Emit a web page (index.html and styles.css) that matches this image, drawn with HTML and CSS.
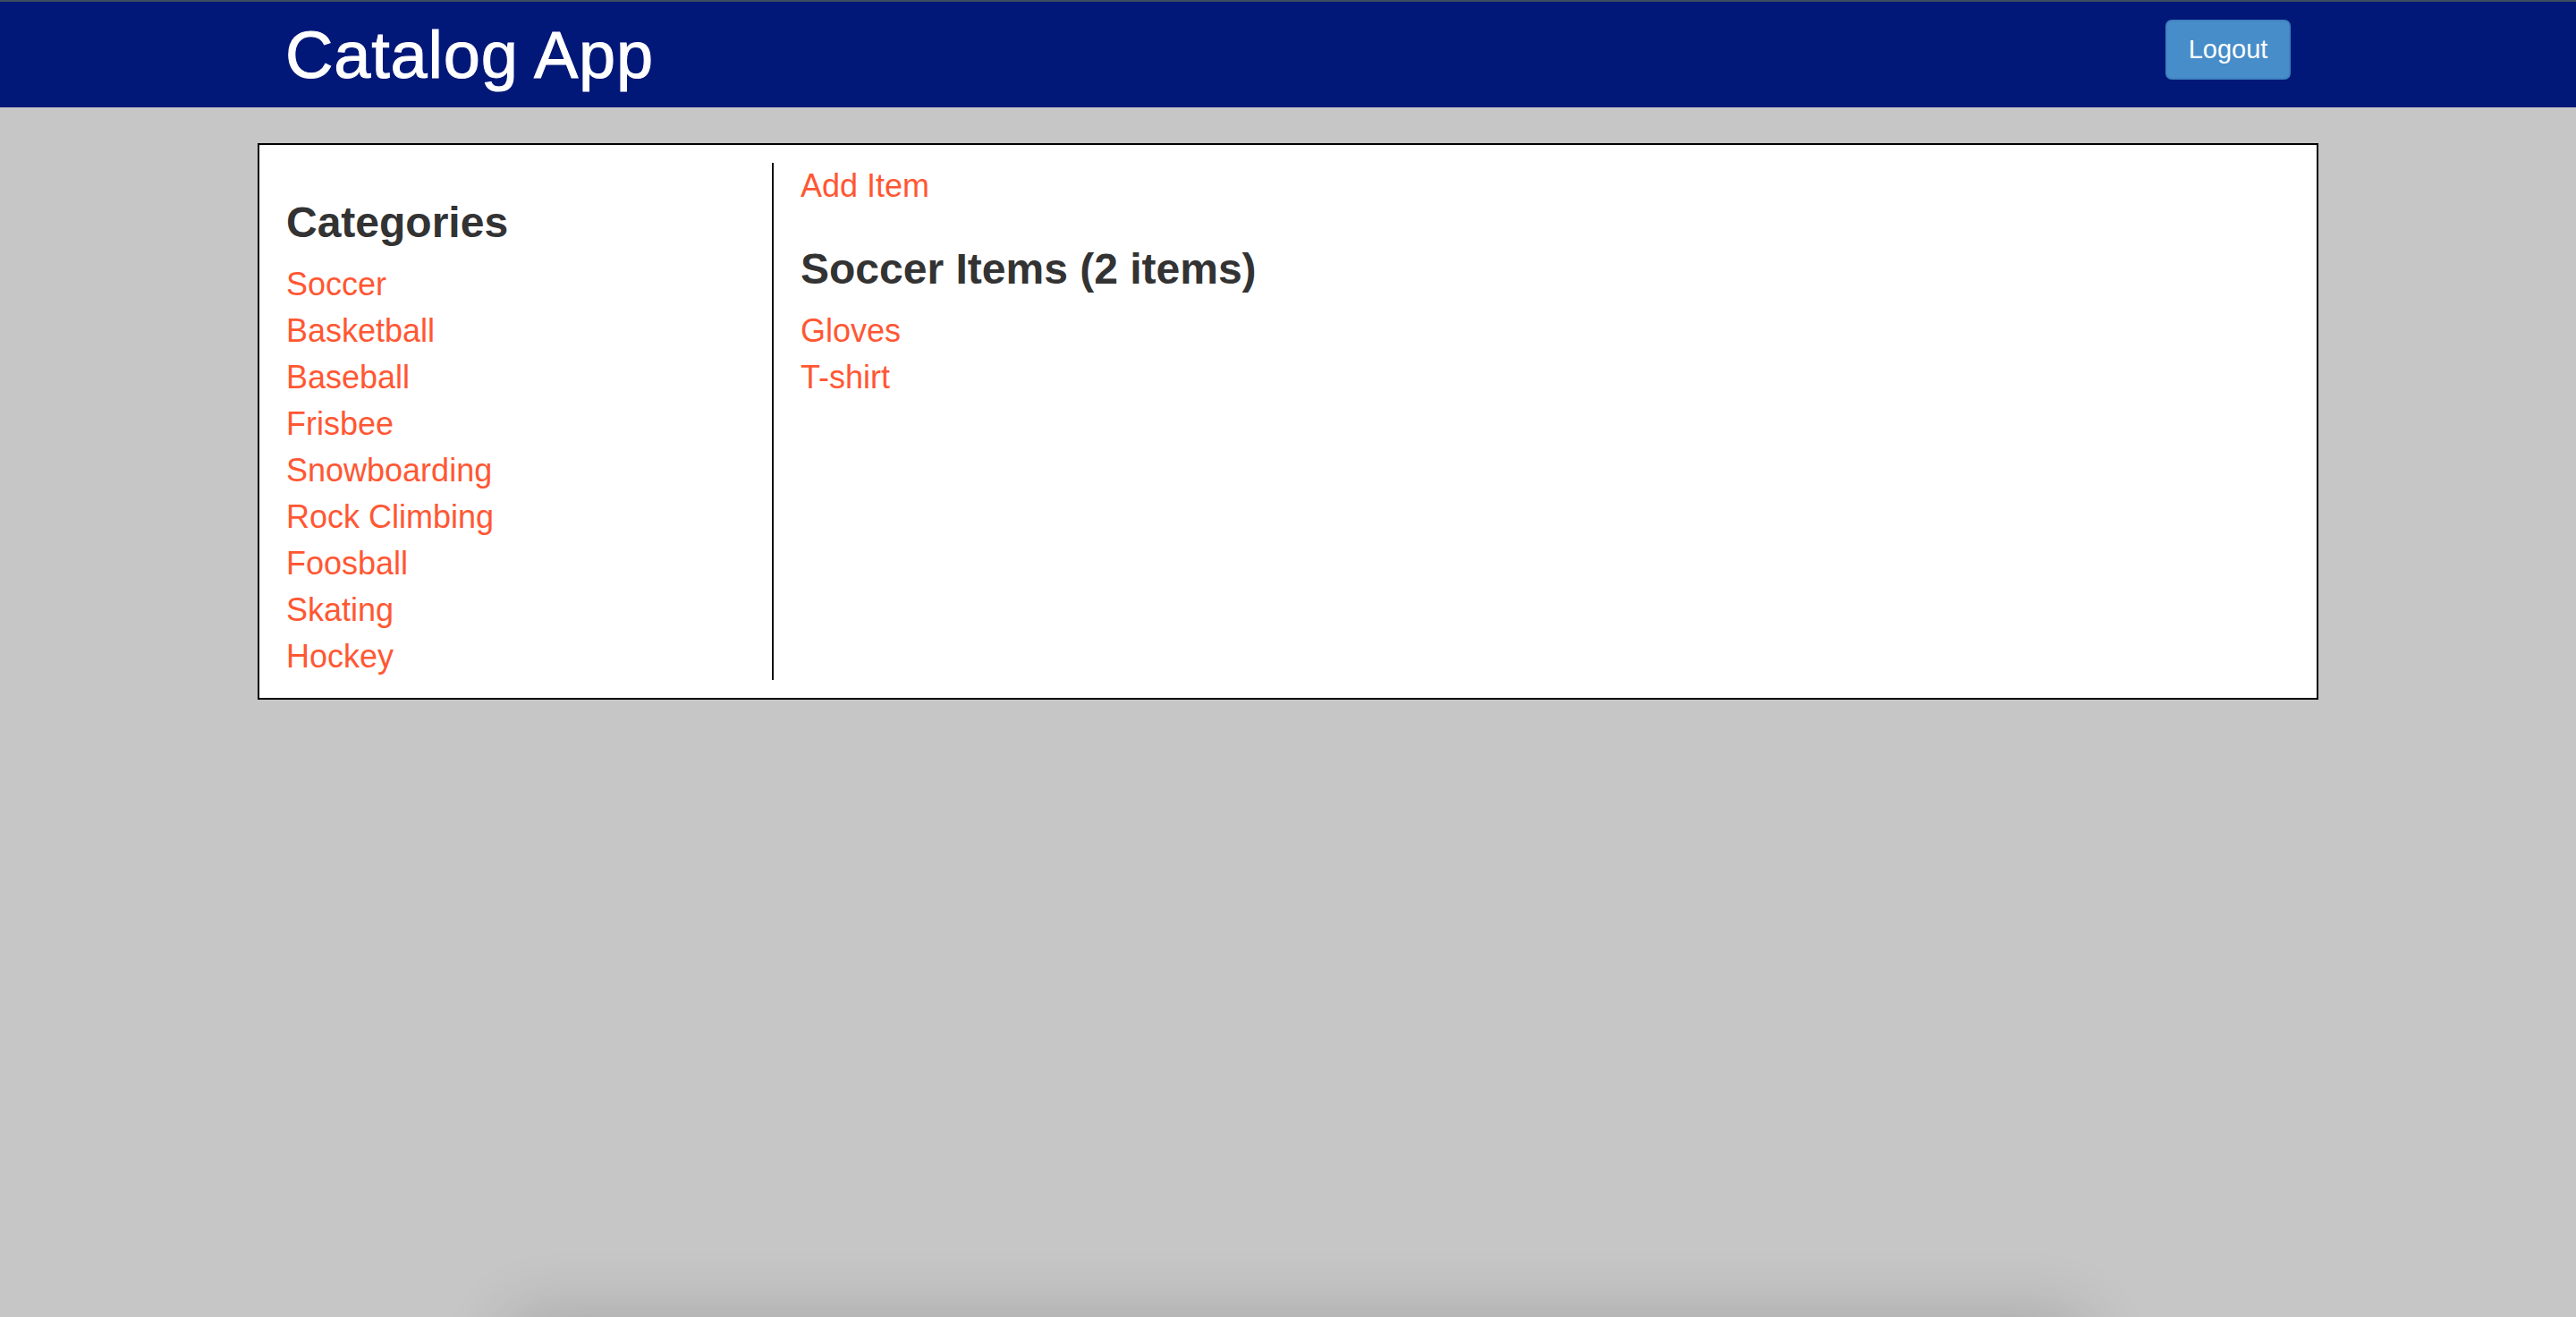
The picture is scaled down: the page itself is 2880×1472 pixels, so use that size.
FILE: index.html
```html
<!DOCTYPE html>
<html lang="en">
<head>
<meta charset="utf-8">
<title>Catalog App</title>
<link rel="stylesheet" href="styles.css">
</head>
<body>
<header class="topbar">
  <div class="topbar-inner">
    <h1 class="brand">Catalog App</h1>
    <a class="btn-logout" href="#">Logout</a>
  </div>
</header>
<main class="card">
  <section class="col-categories">
    <h3 class="heading">Categories</h3>
    <ul class="link-list">
      <li><a href="#">Soccer</a></li>
      <li><a href="#">Basketball</a></li>
      <li><a href="#">Baseball</a></li>
      <li><a href="#">Frisbee</a></li>
      <li><a href="#">Snowboarding</a></li>
      <li><a href="#">Rock Climbing</a></li>
      <li><a href="#">Foosball</a></li>
      <li><a href="#">Skating</a></li>
      <li><a href="#">Hockey</a></li>
    </ul>
  </section>
  <section class="col-items">
    <a class="add-link" href="#">Add Item</a>
    <h3 class="heading">Soccer Items (2 items)</h3>
    <ul class="link-list">
      <li><a href="#">Gloves</a></li>
      <li><a href="#">T-shirt</a></li>
    </ul>
  </section>
</main>
<div class="dock-shadow"></div>
</body>
</html>
```
FILE: styles.css
```css
html, body {
  margin: 0;
  padding: 0;
}
body {
  background: #c6c6c6;
  font-family: "Liberation Sans", Arial, sans-serif;
  color: #333333;
  height: 1472px;
  overflow: hidden;
}
.topbar {
  box-sizing: border-box;
  height: 120px;
  background: #011878;
  border-top: 2px solid #3c4d5c;
}
.topbar-inner {
  width: 2242px;
  margin: 0 auto;
  display: flex;
  justify-content: space-between;
  align-items: flex-start;
  padding-top: 20px;
}
.brand {
  margin: 0;
  font-size: 74px;
  line-height: 80px;
  font-weight: normal;
  color: #ffffff;
  letter-spacing: 0.8px;
  -webkit-text-stroke: 1px #ffffff;
}
.btn-logout {
  box-sizing: border-box;
  display: flex;
  align-items: center;
  justify-content: center;
  width: 140px;
  height: 67px;
  background: #478dca;
  border: 2px solid #3f82c0;
  border-radius: 7px;
  color: #ffffff;
  font-size: 29px;
  text-decoration: none;
}
.card {
  box-sizing: border-box;
  width: 2304px;
  margin: 40px auto 0;
  background: #ffffff;
  border: 2px solid #000000;
  padding: 20px 30px 20px;
  display: flex;
  align-items: stretch;
}
.col-categories {
  width: 543px;
  border-right: 2px solid #111111;
}
.col-items {
  flex: 1;
  padding-left: 30px;
}
.heading {
  margin: 41px 0 17px;
  font-size: 48px;
  line-height: 52px;
  font-weight: bold;
  color: #333333;
}
.link-list {
  list-style: none;
  margin: 0;
  padding: 0;
}
.link-list li {
  font-size: 36px;
  line-height: 52px;
}
.link-list a,
.add-link {
  color: #ff5733;
  text-decoration: none;
}
.add-link {
  display: block;
  font-size: 36px;
  line-height: 52px;
}
.dock-shadow {
  position: fixed;
  left: 560px;
  width: 1780px;
  top: 1472px;
  height: 120px;
  border-radius: 40px;
  box-shadow: 0 -8px 70px rgba(0, 0, 0, 0.14);
}
```
